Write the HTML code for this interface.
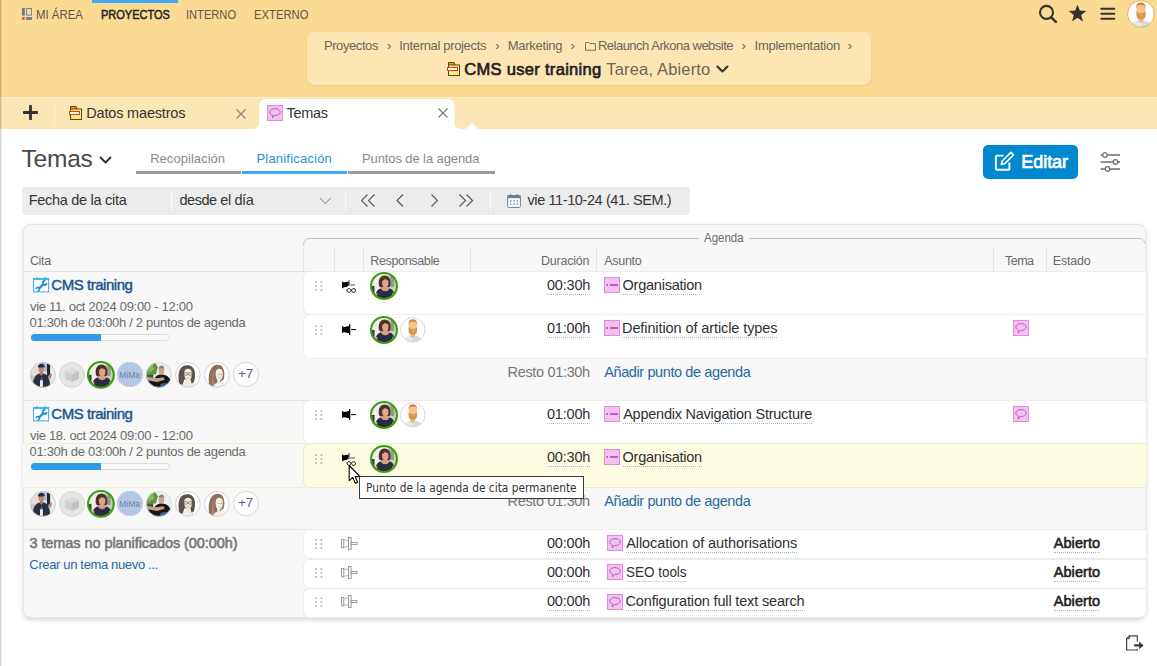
<!DOCTYPE html>
<html lang="es">
<head>
<meta charset="utf-8">
<title>Temas</title>
<style>
*{box-sizing:border-box;margin:0;padding:0}
html,body{width:1157px;height:666px;overflow:hidden;background:#fff}
body{font-family:"Liberation Sans",sans-serif;color:#222;position:relative;font-size:14px}
.abs{position:absolute}
.t{position:absolute;white-space:pre;line-height:1;transform-origin:0 0}
.u{padding-bottom:1.500px;border-bottom:1px dotted #9fbdd6}
#top{position:absolute;left:0;top:0;width:1157px;height:97px;background:#fbdb93}
#edge{display:none}
#actbar{position:absolute;left:92px;top:0;width:86px;height:3px;background:#3fa9f5}
#bc{position:absolute;left:307px;top:32px;width:564px;height:52.500px;background:#fde6b3;border-radius:7px;box-shadow:0 1px 2px rgba(214,170,80,.35)}
#tabs{position:absolute;left:0;top:97px;width:1157px;height:32px;background:#fde6b6;border-top:1px solid #fdedc8}
#leftline{position:absolute;left:0;top:0;width:2px;height:666px;background:linear-gradient(90deg,rgba(0,0,0,.22) 0,rgba(0,0,0,.16) 50%,rgba(0,0,0,.05) 75%,rgba(0,0,0,0) 100%)}
#tbl{position:absolute;left:22.500px;top:224px;width:1123.500px;height:393.500px;background:#f8f8f8;border:1px solid #e5e5e5;border-radius:8px;box-shadow:0 2px 5px rgba(0,0,0,.16)}
</style>
</head>
<body>
<div id="top">
<div id="edge">
</div>
<div id="actbar">
</div>
<svg class="abs" style="left:22px;top:8px" width="10" height="12" viewBox="0 0 10 12">
<rect x="0" y="0" width="2.800" height="7.600" fill="#5f7b9c"/>
<rect x="0" y="9.100" width="2.800" height="2.700" fill="#e8534f"/>
<rect x="4.600" y=".45" width="4.900" height="6.700" fill="none" stroke="#5f7b9c" stroke-width=".9"/>
<rect x="4.100" y="9.100" width="5.900" height="2.700" fill="#5f7b9c"/>
</svg>
<span class="t" style="left:35.56px;top:8.00px;font-size:13px;color:#5e574a;transform:scaleX(0.8783)">MI ÁREA</span>
<span class="t" style="left:100.60px;top:8.00px;font-size:13px;color:#1f1f1f;transform:scaleX(0.8465);-webkit-text-stroke:0.52px #1f1f1f">PROYECTOS</span>
<span class="t" style="left:186.48px;top:8.00px;font-size:13px;color:#5e574a;transform:scaleX(0.8556)">INTERNO</span>
<span class="t" style="left:254.08px;top:8.00px;font-size:13px;color:#5e574a;transform:scaleX(0.8666)">EXTERNO</span>
<svg class="abs" style="left:1036px;top:2px" width="24" height="24" viewBox="0 0 24 24">
<circle cx="10.500" cy="10.400" r="6.500" fill="none" stroke="#333" stroke-width="2.100"/>
<path d="M15.300 15.300l4.500 4.500" stroke="#333" stroke-width="2.500" stroke-linecap="round"/>
</svg>
<svg class="abs" style="left:1068px;top:4px" width="19" height="18" viewBox="0 0 19 18">
<path d="M9.500.4l2.300 6.200 6.600.3-5.200 4.100 1.800 6.400-5.500-3.700L4 17.400 5.800 11 .6 6.900l6.600-.3z" fill="#333"/>
</svg>
<svg class="abs" style="left:1100px;top:7px" width="16" height="14" viewBox="0 0 16 14">
<rect x=".3" y=".8" width="15" height="2" rx="1" fill="#333"/>
<rect x=".3" y="5.800" width="15" height="2" rx="1" fill="#333"/>
<rect x=".3" y="10.800" width="15" height="2" rx="1" fill="#333"/>
</svg>
<svg class="abs" style="left:1126.5px;top:-0.5px" width="28" height="28" viewBox="0 0 28 28">
<defs>
<clipPath id="m1140_13">
<circle cx="14" cy="14" r="13.300"/>
</clipPath>
</defs>
<g clip-path="url(#m1140_13)">
<rect width="28" height="28" fill="#fff"/>
<path d="M3 28c0-5 4-7.300 11-7.300s11 2.300 11 7.300z" fill="#e6e6e6"/>
<path d="M14 20.700V28h11c0-5-4-7.300-11-7.300z" fill="#dadada"/>
<path d="M11.500 16h5v5.200L14 23l-2.500-1.800z" fill="#eeb989"/>
<rect x="9.500" y="3.200" width="9" height="16" rx="3.600" fill="#f5c48e"/>
<path d="M9.500 8c-.3-3.800 1.400-5.600 4.500-5.600s4.800 1.800 4.500 5.600c-.5-1.500-1-2.300-1.500-2.700h-6c-.5.400-1 1.200-1.500 2.700z" fill="#c68a52"/>
<path d="M9.500 11c.9 1.700 2.100 2.200 4.500 2.200s3.600-.5 4.500-2.200v4.600c0 2.300-2 3.900-4.500 3.900s-4.500-1.600-4.500-3.900z" fill="#d6944f"/>
<rect x="12.300" y="14.600" width="3.400" height="1" rx=".5" fill="#e8b07a"/>
</g>
<circle cx="14" cy="14" r="13.400" fill="none" stroke="#d9b56c" stroke-width="1"/>
</svg>
<div id="bc">
</div>
<span class="t" style="left:323.93px;top:39.00px;font-size:13px;color:#6b665c;letter-spacing:-0.410px">Proyectos</span>
<span class="t" style="left:386.94px;top:39.00px;font-size:13px;color:#6b665c">›</span>
<span class="t" style="left:399.30px;top:39.00px;font-size:13px;color:#6b665c;letter-spacing:-0.333px">Internal projects</span>
<span class="t" style="left:495.14px;top:39.00px;font-size:13px;color:#6b665c">›</span>
<span class="t" style="left:507.63px;top:39.00px;font-size:13px;color:#6b665c;letter-spacing:-0.272px">Marketing</span>
<span class="t" style="left:570.44px;top:39.00px;font-size:13px;color:#6b665c">›</span>
<svg class="abs" style="left:585px;top:42px" width="11" height="9" viewBox="0 0 11 9">
<path d="M.5 8.300V.5h3.300l.8 1.100h5.900v6.700z" fill="none" stroke="#6b665c" stroke-width=".9"/>
</svg>
<span class="t" style="left:597.93px;top:39.00px;font-size:13px;color:#6b665c;letter-spacing:-0.503px">Relaunch Arkona website</span>
<span class="t" style="left:741.44px;top:39.00px;font-size:13px;color:#6b665c">›</span>
<span class="t" style="left:754.60px;top:39.00px;font-size:13px;color:#6b665c;letter-spacing:-0.259px">Implementation</span>
<span class="t" style="left:847.74px;top:39.00px;font-size:13px;color:#6b665c">›</span>
<svg class="abs" style="left:447px;top:62px" width="14" height="15" viewBox="0 0 14 15">
<path d="M1.500 3.500V.5h5.700l.9 2.900" fill="#f59a10" stroke="#5a4a10" stroke-width="1"/>
<rect x="1.500" y="3" width="11" height="10.500" fill="#fdea80" stroke="#4d4a22" stroke-width="1"/>
<rect x=".5" y="5.500" width="10" height="3" fill="#fff" stroke="#ee3311" stroke-width="1"/>
</svg>
<span class="t" style="left:464.18px;top:61.00px;font-size:16.5px;color:#1f1f1f;letter-spacing:0.314px;-webkit-text-stroke:0.66px #1f1f1f">CMS user training</span>
<span class="t" style="left:606.34px;top:61.00px;font-size:16.5px;color:#6b665c;letter-spacing:0.164px">Tarea, Abierto</span>
<svg class="abs" style="left:716px;top:65px" width="13" height="9" viewBox="0 0 13 9">
<path d="M1.400 1.500l5 5 5-5" fill="none" stroke="#333" stroke-width="2.100" stroke-linecap="round" stroke-linejoin="round"/>
</svg>
</div>
<div id="tabs">
</div>
<svg class="abs" style="left:0;top:97px" width="480" height="32" viewBox="0 0 480 32">
<path d="M259.300 32V8a6 6 0 0 1 6-6h183.200a6 6 0 0 1 6 6v24z" fill="#fff"/>
<path d="M253 32h7v-7a7 7 0 0 1-7 7zM454 25v7h7a7 7 0 0 1-7-7z" fill="#fff"/>
<path d="M465.500 32l6.300-6.500 6.300 6.500z" fill="#fff"/>
<rect x="54.500" y="4" width="1" height="23" fill="#fbefd2"/>
</svg>
<svg class="abs" style="left:23px;top:105px" width="15" height="15" viewBox="0 0 15 15">
<path d="M7.500 1v13M1 7.500h13" stroke="#333" stroke-width="2.800" stroke-linecap="round"/>
</svg>
<svg class="abs" style="left:69px;top:106px" width="14" height="15" viewBox="0 0 14 15">
<path d="M1.500 3.500V.5h5.700l.9 2.900" fill="#f59a10" stroke="#5a4a10" stroke-width="1"/>
<rect x="1.500" y="3" width="11" height="10.500" fill="#fdea80" stroke="#4d4a22" stroke-width="1"/>
<rect x=".5" y="5.500" width="10" height="3" fill="#fff" stroke="#ee3311" stroke-width="1"/>
</svg>
<span class="t" style="left:86.31px;top:106.00px;font-size:14.5px;color:#333;letter-spacing:-0.180px">Datos maestros</span>
<svg class="abs" style="left:236px;top:108.500px" width="10" height="10" viewBox="0 0 10 10">
<path d="M.5.500l9 9M9.500.5l-9 9" stroke="#8a857a" stroke-width="1.100"/>
</svg>
<svg class="abs" style="left:267px;top:105px" width="16" height="16" viewBox="0 0 16 16">
<rect x=".5" y=".5" width="15" height="15" fill="#efc2ef" stroke="#df8cdf"/>
<path d="M8 3.6c-3 0-5.2 1.5-5.2 3.5 0 1.5 1.2 2.7 3 3.2l-.4 2.6 2.2-2.4H8c3 0 5.2-1.5 5.2-3.4S11 3.600 8 3.600z" fill="#efc2ef" stroke="#cc55cc" stroke-width="1"/>
</svg>
<span class="t" style="left:286.43px;top:106.00px;font-size:14.5px;color:#333;letter-spacing:-0.282px">Temas</span>
<svg class="abs" style="left:437.500px;top:108px" width="10" height="10" viewBox="0 0 10 10">
<path d="M.5.500l9 9M9.500.5l-9 9" stroke="#777" stroke-width="1.100"/>
</svg>
<div id="leftline">
</div>
<span class="t" style="left:21.46px;top:147.00px;font-size:24.5px;color:#484848;letter-spacing:-0.188px">Temas</span>
<svg class="abs" style="left:99px;top:155.500px" width="13" height="9" viewBox="0 0 13 9">
<path d="M1.500 1.500l5 5 5-5" fill="none" stroke="#333" stroke-width="1.900" stroke-linecap="round" stroke-linejoin="round"/>
</svg>
<span class="t" style="left:150.18px;top:152.00px;font-size:13px;color:#8a8a8a;letter-spacing:0.042px">Recopilación</span>
<span class="t" style="left:256.43px;top:152.00px;font-size:13px;color:#2a8fd8;letter-spacing:0.200px">Planificación</span>
<span class="t" style="left:361.93px;top:152.00px;font-size:13px;color:#8a8a8a;letter-spacing:-0.096px">Puntos de la agenda</span>
<div class="abs" style="left:136px;top:171px;width:104.500px;height:3px;background:#999">
</div>
<div class="abs" style="left:242px;top:171px;width:104.500px;height:3px;background:#3fa9f5">
</div>
<div class="abs" style="left:348px;top:171px;width:147px;height:3px;background:#999">
</div>
<div class="abs" style="left:983px;top:145px;width:95px;height:34px;border-radius:5px;background:#0288d1">
</div>
<svg class="abs" style="left:994px;top:150px" width="22" height="22" viewBox="0 0 22 22">
<path d="M9.500 5.600H2.900a1 1 0 0 0-1 1v12.200a1 1 0 0 0 1 1h11.500a1 1 0 0 0 1-1v-6.300" fill="none" stroke="#fff" stroke-width="1.900"/>
<path d="M16.900 2.300l2.600 2.600-8.700 8.700-3.500.9.900-3.500z" fill="#0288d1" stroke="#fff" stroke-width="1.600" stroke-linejoin="round"/>
</svg>
<span class="t" style="left:1021.22px;top:153.00px;font-size:18px;color:#fff;letter-spacing:-0.033px;-webkit-text-stroke:0.72px #fff">Editar</span>
<svg class="abs" style="left:1100px;top:151px" width="21" height="22" viewBox="0 0 21 22" fill="none" stroke="#6e6e6e" stroke-width="1.300">
<path d="M.5 4h2M7.400 4h12.600M.5 11h12.600M18 11h2M.5 18h4.600M10 18h10"/>
<circle cx="4.900" cy="4" r="2.300"/>
<circle cx="15.500" cy="11" r="2.300"/>
<circle cx="7.500" cy="18" r="2.300"/>
</svg>
<div class="abs" style="left:22px;top:187px;width:667.500px;height:28px;border-radius:4px;background:#ececec">
</div>
<div class="abs" style="left:170.5px;top:190.500px;width:1px;height:21px;background:#f9f9f9">
</div>
<div class="abs" style="left:344.5px;top:190.500px;width:1px;height:21px;background:#f9f9f9">
</div>
<div class="abs" style="left:490px;top:190.500px;width:1px;height:21px;background:#f9f9f9">
</div>
<span class="t" style="left:28.81px;top:193.00px;font-size:14.5px;color:#343434;letter-spacing:-0.297px">Fecha de la cita</span>
<span class="t" style="left:179.39px;top:193.00px;font-size:14.5px;color:#343434;letter-spacing:-0.424px">desde el día</span>
<svg class="abs" style="left:318.500px;top:196.500px" width="13" height="8" viewBox="0 0 13 8">
<path d="M.8 1l5.500 5.500L11.800 1" fill="none" stroke="#6b7f94" stroke-width="1"/>
</svg>
<svg class="abs" style="left:360px;top:193px" width="115" height="15" viewBox="0 0 115 15" fill="none" stroke="#555" stroke-width="1.100">
<path d="M7.500 1.500l-6 6 6 6M14.500 1.500l-6 6 6 6"/>
<path d="M43 1.500l-6 6 6 6"/>
<path d="M71.500 1.500l6 6-6 6"/>
<path d="M99.500 1.500l6 6-6 6M106.500 1.500l6 6-6 6"/>
</svg>
<svg class="abs" style="left:506.500px;top:194px" width="14" height="14" viewBox="0 0 14 14">
<rect x=".6" y="1.600" width="12.800" height="11.800" rx="1" fill="#fff" stroke="#6b7f94" stroke-width="1"/>
<rect x=".6" y="1.200" width="12.800" height="3" fill="#6b7f94"/>
<rect x="3" y="0" width="1.200" height="2" fill="#6b7f94"/>
<rect x="9.800" y="0" width="1.200" height="2" fill="#6b7f94"/>
<g fill="#6b7f94">
<rect x="3" y="6.300" width="1.400" height="1.400"/>
<rect x="6.300" y="6.300" width="1.400" height="1.400"/>
<rect x="9.600" y="6.300" width="1.400" height="1.400"/>
<rect x="3" y="9.500" width="1.400" height="1.400"/>
<rect x="6.300" y="9.500" width="1.400" height="1.400"/>
<rect x="9.600" y="9.500" width="1.400" height="1.400"/>
</g>
</svg>
<span class="t" style="left:527.46px;top:193.00px;font-size:14.5px;color:#343434;letter-spacing:-0.394px">vie 11-10-24 (41. SEM.)</span>
<div id="tbl">
</div>
<svg class="abs" style="left:303px;top:237px" width="843" height="36" viewBox="0 0 843 36" fill="none" stroke="#c4c4c4" stroke-width="1">
<path d="M.5 8.500V8a6.500 6.500 0 0 1 6.500-6.500H396M446 1.500h390a6.500 6.500 0 0 1 6.300 5.500"/>
</svg>
<span class="t" style="left:704.23px;top:232.00px;font-size:12.5px;color:#6a6a6a;transform:scaleX(0.9166)">Agenda</span>
<span class="t" style="left:29.88px;top:255.00px;font-size:12.5px;color:#6a6a6a;letter-spacing:-0.290px">Cita</span>
<span class="t" style="left:370.23px;top:255.00px;font-size:12.5px;color:#6a6a6a;letter-spacing:-0.339px">Responsable</span>
<span class="t" style="left:540.98px;top:255.00px;font-size:12.5px;color:#6a6a6a;letter-spacing:-0.208px">Duración</span>
<span class="t" style="left:604.23px;top:255.00px;font-size:12.5px;color:#6a6a6a;letter-spacing:-0.276px">Asunto</span>
<span class="t" style="left:1004.98px;top:255.00px;font-size:12.5px;color:#6a6a6a;letter-spacing:-0.521px">Tema</span>
<span class="t" style="left:1052.72px;top:255.00px;font-size:12.5px;color:#6a6a6a;letter-spacing:-0.176px">Estado</span>
<div class="abs" style="left:303px;top:248px;width:1px;height:23px;background:#e6e6e6">
</div>
<div class="abs" style="left:333.5px;top:248px;width:1px;height:23px;background:#e6e6e6">
</div>
<div class="abs" style="left:363px;top:248px;width:1px;height:23px;background:#e6e6e6">
</div>
<div class="abs" style="left:470px;top:248px;width:1px;height:23px;background:#e6e6e6">
</div>
<div class="abs" style="left:596px;top:248px;width:1px;height:23px;background:#e6e6e6">
</div>
<div class="abs" style="left:993px;top:248px;width:1px;height:23px;background:#e6e6e6">
</div>
<div class="abs" style="left:1046px;top:248px;width:1px;height:23px;background:#e6e6e6">
</div>
<div class="abs" style="left:23px;top:271px;width:1123px;height:1px;background:#e2e2e2">
</div>
<div class="abs" style="left:304px;top:272px;width:842px;height:42px;background:#fff;border-radius:6px 0 0 6px;box-shadow:0 0 0 1px #ececec">
</div>
<div class="abs" style="left:304px;top:315px;width:842px;height:42.5px;background:#fff;border-radius:6px 0 0 6px;box-shadow:0 0 0 1px #ececec">
</div>
<svg class="abs" style="left:33px;top:277px" width="17" height="16" viewBox="0 0 17 16">
<rect x=".55" y="1.500" width="15" height="13.400" fill="#fff" stroke="#45b4f2" stroke-width="1.100"/>
<rect x="0" y="1" width="16.100" height="2.100" fill="#45b4f2"/>
<rect x="3.300" y="0" width="1.300" height="2" fill="#45b4f2"/>
<rect x="11.500" y="0" width="1.300" height="2" fill="#45b4f2"/>
<g fill="none" stroke="#1a8fdc">
<path d="M5.600 11.900l5.400-5.400" stroke-width="2.300"/>
<circle cx="11.700" cy="5.900" r="2" stroke-width="1.700" stroke-dasharray="9.200 3.400"/>
<circle cx="4.800" cy="12.300" r="1.700" stroke-width="1.500" stroke-dasharray="7.700 3" transform="rotate(180 4.800 12.300)"/>
</g>
</svg>
<span class="t" style="left:51.25px;top:277.00px;font-size:15px;color:#15568f;letter-spacing:-0.454px;-webkit-text-stroke:0.42px #15568f">CMS training</span>
<span class="t" style="left:29.96px;top:300.00px;font-size:13px;color:#6a6a6a;letter-spacing:-0.277px">vie 11. oct 2024 09:00 - 12:00</span>
<span class="t" style="left:29.49px;top:316.00px;font-size:13px;color:#6a6a6a;letter-spacing:-0.298px">01:30h de 03:00h / 2 puntos de agenda</span>
<div class="abs" style="left:30.500px;top:334.3px;width:139px;height:7px;border-radius:4px;border:1px solid #dcdcdc;background:#fafafa">
</div>
<div class="abs" style="left:30.500px;top:334.3px;width:70px;height:7px;border-radius:4px 0 0 4px;background:#2f9ae8">
</div>
<svg class="abs" style="left:30.1px;top:361.8px" width="25.800" height="25.800" viewBox="0 0 25 25">
<defs>
<clipPath id="p1374">
<circle cx="12.500" cy="12.500" r="12.200"/>
</clipPath>
</defs>
<g clip-path="url(#p1374)">
<rect width="25" height="25" fill="#e4dcdc"/>
<rect x="10" y="0" width="8" height="9" fill="#a9c0da"/>
<rect x="16.500" y="1.500" width="3.200" height="13" fill="#26272c"/>
<rect x="19.700" y="0" width="5.300" height="25" fill="#e9edf2"/>
<rect x="0" y="13" width="5" height="12" fill="#cfc8c4"/>
<path d="M2.500 25c0-8.500 2.500-14.200 8.800-14.200 5.700 0 8.200 4.700 8.200 14.200z" fill="#2a2f3a"/>
<ellipse cx="10.900" cy="6.900" rx="2.700" ry="3.100" fill="#b88d76"/>
<path d="M7.600 5.200c0-2.400 1.500-3.600 3.500-3.600 1.900 0 3.200 1.200 3.200 3.200l-1.200.5H8.400z" fill="#262c3c"/>
<path d="M9.600 9.600h2.800l.4 2.400-1.800 1.300-1.800-1.300z" fill="#a67c66"/>
<path d="M17.300 14.300l2.600-3.400 1.500.9-1.400 4.300-2.200.4z" fill="#b88d76"/>
<path d="M11.300 13.500l.8 5.500h-1.600z" fill="#8e9aa8"/>
<rect x="9.700" y="17.500" width="2.800" height="7.500" rx=".8" fill="#e6edf6"/>
<rect x="10.100" y="16.300" width="2" height="1.500" fill="#3b6fd0"/>
</g>
<circle cx="12.500" cy="12.500" r="12.100" fill="none" stroke="#c9c9c9" stroke-width=".8"/>
</svg>
<svg class="abs" style="left:58.9px;top:361.8px" width="25.800" height="25.800" viewBox="0 0 25 25">
<circle cx="12.500" cy="12.500" r="12" fill="#e5e5e5" stroke="#d2d2d2" stroke-width=".9"/>
<path d="M12.500 5.800l6.800 3v7.400l-6.800 3.300-6.800-3.300V8.800z" fill="#cfcfcf"/>
<path d="M12.500 11.900l6.800-3.100v7.400l-6.800 3.300z" fill="#c2c2c2"/>
<path d="M12.500 5.800l6.800 3-6.800 3.100-6.800-3.100z" fill="#dadada"/>
</svg>
<svg class="abs" style="left:87.19999999999999px;top:361.1px" width="27.8" height="27.8" viewBox="0 0 28 28">
<defs>
<clipPath id="cw101_375">
<circle cx="14" cy="14" r="12.500"/>
</clipPath>
</defs>
<g clip-path="url(#cw101_375)">
<rect width="28" height="28" fill="#efeeea"/>
<rect x="18" y="0" width="10" height="20" fill="#c9d2c0"/>
<rect x="20.500" y="3" width="3.500" height="12" fill="#8fa080"/>
<rect x="2" y="14" width="2.500" height="9" fill="#3b3a3a"/>
<path d="M8.800 13c-.6-5.500 1.500-9.500 5.800-9.500s6.600 3.700 6 9.500c-.3 1.800-1.600 2.600-2.800 2.600h-6c-1.400 0-2.700-.8-3-2.600z" fill="#4e3226"/>
<ellipse cx="15.300" cy="11" rx="3.200" ry="4.200" fill="#dfa58c"/>
<path d="M12.100 9.300c.6-2.300 1.900-3.300 3.600-3.300 1.400 0 2.400.8 2.800 2.600-1.300-.7-2.500-1.200-3.700-1.600-.8.800-1.700 1.600-2.700 2.300z" fill="#4e3226"/>
<ellipse cx="15.300" cy="17.300" rx="4.600" ry="2.600" fill="#d99e85"/>
<path d="M13.600 14.500h3.400v4h-3.400z" fill="#d99e85"/>
<path d="M5.500 24c.3-4.500 2.500-6.800 5.200-7.400l2.400 2.300h4.300l2.300-2.300c2.900.7 4.600 3 4.800 7.400v4h-19z" fill="#2b2c42"/>
<path d="M13 16.600h4.600l-2.300 3.200z" fill="#dba189"/>
<path d="M5.700 20.500l1.800 1.200-.8 6.300H4.900z" fill="#dba189"/>
<path d="M23.800 20.500l-1.800 1.200.8 6.300h1.800z" fill="#dba189"/>
</g>
<circle cx="14" cy="14" r="12.950" fill="none" stroke="#3a9d12" stroke-width="2.100"/>
</svg>
<div class="abs" style="left:117.300px;top:361.7px;width:25.700px;height:25.700px;border-radius:50%;background:#b5c7e6;box-shadow:inset 0 0 0 1px #c6cfe2">
</div>
<span class="t" style="left:119.30px;top:371.00px;font-size:8.5px;color:#6c7fa6;letter-spacing:-0.030px">MiMa</span>
<svg class="abs" style="left:146.2px;top:361.8px" width="25.800" height="25.800" viewBox="0 0 25 25">
<defs>
<clipPath id="p5374">
<circle cx="12.500" cy="12.500" r="12.200"/>
</clipPath>
</defs>
<g clip-path="url(#p5374)">
<rect width="25" height="25" fill="#eef1f2"/>
<path d="M0 2l4-2 5 1 2.500 4-2 7H0z" fill="#5e9440"/>
<path d="M1 5l5-3 2 5-5 4z" fill="#86b85c"/>
<rect x="0" y="12" width="7" height="4" fill="#3e5a34"/>
<path d="M6.500 25c0-8.500 2.500-13 8.500-13s9 4 9.500 9l-1 4z" fill="#17181b"/>
<ellipse cx="15" cy="8.300" rx="2.700" ry="3.400" fill="#c9a088"/>
<path d="M12.300 7.200c0-2.600 1.200-3.700 2.800-3.700s2.700 1.100 2.700 3.500c-1-1.200-4.300-1.200-5.500.2z" fill="#8a8580"/>
<path d="M12.800 9.800c.6 1.800 1.400 2.400 2.300 2.400s1.700-.6 2.200-2.400l-.4 2.600h-3.700z" fill="#9b8878"/>
<path d="M1 14.500l9 1.300 7-1 1.200 2.400-7.500 2.300-9.700-1.500z" fill="#c9a088"/>
<path d="M0 17.500l8 1.500 2 6H0z" fill="#16171c"/>
<path d="M14 21l6-1 2 5h-8z" fill="#3a5e9a"/>
</g>
<circle cx="12.500" cy="12.500" r="12.100" fill="none" stroke="#cfcfcf" stroke-width=".7"/>
</svg>
<svg class="abs" style="left:175.0px;top:361.8px" width="25.800" height="25.800" viewBox="0 0 25 25">
<defs>
<clipPath id="p6374">
<circle cx="12.500" cy="12.500" r="12"/>
</clipPath>
</defs>
<g clip-path="url(#p6374)">
<rect width="25" height="25" fill="#fff"/>
<path d="M4.500 21.500c-1.800-5-1.600-13 1.800-16.300 2.700-2.600 8-2.600 10.700-.2 3 2.800 3 9.500 1.300 14.500l-2.300 2-1-4.500h-6l-1.500 5z" fill="#5e544c"/>
<path d="M9.300 8.500c1-2.300 5-2.700 6.500-.3.800 1.400.8 5.500-.5 8-1 1.700-4 1.800-5.200 0-1.300-2.200-1.500-6-.8-7.700z" fill="#f4ebe3"/>
<rect x="8.800" y="10.400" width="3.300" height="2.300" rx=".7" fill="#e9efe2" stroke="#64703f" stroke-width=".7"/>
<rect x="13" y="10.400" width="3.300" height="2.300" rx=".7" fill="#e9efe2" stroke="#64703f" stroke-width=".7"/>
<path d="M10.800 15.200c.8.600 2.200.6 3 0" stroke="#c98f84" stroke-width=".6" fill="none"/>
<path d="M7 25c.3-3.700 2.300-5.200 5.500-5.200s5.200 1.500 5.500 5.200z" fill="#f3f0ea" stroke="#d9d2c6" stroke-width=".4"/>
<path d="M11 17.300h3v3l-1.500 1.500-1.500-1.500z" fill="#f1e6dc"/>
</g>
<circle cx="12.500" cy="12.500" r="12" fill="none" stroke="#cfcfcf" stroke-width=".9"/>
</svg>
<svg class="abs" style="left:203.9px;top:361.8px" width="25.800" height="25.800" viewBox="0 0 25 25">
<defs>
<clipPath id="p7374">
<circle cx="12.500" cy="12.500" r="12"/>
</clipPath>
</defs>
<g clip-path="url(#p7374)">
<rect width="25" height="25" fill="#fff"/>
<path d="M5.500 24c-1.500-6-1.500-15.500 3-19.500 2.800-2.500 7.500-2.300 9.500.5 2 3 2.200 8 1 12l-2 1.500-7 6.500z" fill="#8f6e5a"/>
<path d="M8 24c-1-5-.5-12 2-16l-1 8 2 8z" fill="#a98a76"/>
<path d="M11.800 8.300c1.500-2.400 5-2.300 6 .2.800 2 .6 5.700-.7 8-1 1.800-3.300 2-4.500.5-1.500-2-1.800-6.500-.8-8.700z" fill="#f6ece4"/>
<path d="M14 12h1.300M16.300 12h1.200" stroke="#6b5346" stroke-width=".6"/>
<path d="M14.600 15.600c.7.400 1.600.4 2.200 0" stroke="#d08a86" stroke-width=".6" fill="none"/>
<path d="M9 25c.3-3.200 2.200-4.800 5.200-4.800s4.800 1.600 5.200 4.800z" fill="#f7f2ec" stroke="#e0d6ca" stroke-width=".4"/>
<path d="M12.800 17.200h2.800v3.300h-2.800z" fill="#f3e7dd"/>
</g>
<circle cx="12.500" cy="12.500" r="12" fill="none" stroke="#cfcfcf" stroke-width=".9"/>
</svg>
<div class="abs" style="left:233.200px;top:361.6px;width:25.800px;height:25.800px;border-radius:50%;background:#fff;border:1px solid #d6d6d6">
</div>
<span class="t" style="left:238.36px;top:368.00px;font-size:12px;color:#5a5c8a;transform:scaleX(1.1191)">+7</span>
<svg class="abs" style="left:315px;top:281px" width="8" height="10" viewBox="0 0 8 10">
<rect x="0.2" y="0.2" width="1.700" height="1.700" fill="#aab4c6"/>
<rect x="0.2" y="4.2" width="1.700" height="1.700" fill="#aab4c6"/>
<rect x="0.2" y="8.2" width="1.700" height="1.700" fill="#aab4c6"/>
<rect x="5.6" y="0.2" width="1.700" height="1.700" fill="#aab4c6"/>
<rect x="5.6" y="4.2" width="1.700" height="1.700" fill="#aab4c6"/>
<rect x="5.6" y="8.2" width="1.700" height="1.700" fill="#aab4c6"/>
</svg>
<svg class="abs" style="left:341.9px;top:280.1px" width="15" height="13.500" viewBox="0 0 15 13.500">
<rect x="0" y="1.600" width="1.300" height="6.600" rx=".5" fill="#000"/>
<path d="M1 2.500l6.200-.9v3.600L4.500 7l-3.500.4z" fill="#000"/>
<rect x="6.400" y="0" width="1.400" height="5.600" rx=".5" fill="#777"/>
<rect x="8.300" y="4.300" width="4.700" height="1.300" fill="#777"/>
<path d="M9.300 10.600c-.8-1.500-1.500-2-2.400-2-1 0-1.800.8-1.800 1.900s.8 1.900 1.800 1.900c.9 0 1.600-.5 2.400-1.800.8-1.500 1.500-2 2.400-2 1 0 1.800.8 1.800 1.900s-.8 1.900-1.800 1.900c-.9 0-1.600-.5-2.400-1.800z" fill="none" stroke="#000" stroke-width="1"/>
</svg>
<svg class="abs" style="left:370px;top:272px" width="28" height="28" viewBox="0 0 28 28">
<defs>
<clipPath id="cw384_286">
<circle cx="14" cy="14" r="12.500"/>
</clipPath>
</defs>
<g clip-path="url(#cw384_286)">
<rect width="28" height="28" fill="#efeeea"/>
<rect x="18" y="0" width="10" height="20" fill="#c9d2c0"/>
<rect x="20.500" y="3" width="3.500" height="12" fill="#8fa080"/>
<rect x="2" y="14" width="2.500" height="9" fill="#3b3a3a"/>
<path d="M8.800 13c-.6-5.500 1.500-9.500 5.800-9.500s6.600 3.700 6 9.500c-.3 1.800-1.600 2.600-2.800 2.600h-6c-1.400 0-2.700-.8-3-2.600z" fill="#4e3226"/>
<ellipse cx="15.300" cy="11" rx="3.200" ry="4.200" fill="#dfa58c"/>
<path d="M12.100 9.300c.6-2.300 1.900-3.300 3.600-3.300 1.400 0 2.400.8 2.800 2.600-1.300-.7-2.500-1.200-3.700-1.600-.8.800-1.700 1.600-2.700 2.300z" fill="#4e3226"/>
<ellipse cx="15.300" cy="17.300" rx="4.600" ry="2.600" fill="#d99e85"/>
<path d="M13.600 14.500h3.400v4h-3.400z" fill="#d99e85"/>
<path d="M5.500 24c.3-4.500 2.500-6.800 5.200-7.400l2.400 2.300h4.300l2.300-2.300c2.900.7 4.600 3 4.800 7.400v4h-19z" fill="#2b2c42"/>
<path d="M13 16.600h4.600l-2.300 3.200z" fill="#dba189"/>
<path d="M5.700 20.500l1.800 1.200-.8 6.300H4.900z" fill="#dba189"/>
<path d="M23.800 20.500l-1.800 1.200.8 6.300h1.800z" fill="#dba189"/>
</g>
<circle cx="14" cy="14" r="12.950" fill="none" stroke="#3a9d12" stroke-width="2.100"/>
</svg>
<span class="t u" style="left:546.93px;top:278.00px;font-size:14.5px;color:#303030;letter-spacing:-0.173px">00:30h</span>
<svg class="abs" style="left:604px;top:276.8px" width="16" height="16" viewBox="0 0 16 16">
<rect x=".5" y=".5" width="15" height="15" fill="#efc2ef" stroke="#df8cdf"/>
<rect x="2.300" y="7" width="1.800" height="2" fill="#cc55cc"/>
<rect x="6" y="7" width="8" height="2" fill="#cc55cc"/>
</svg>
<span class="t u" style="left:622.52px;top:278.00px;font-size:14.5px;color:#303030;letter-spacing:-0.232px">Organisation</span>
<svg class="abs" style="left:315px;top:325px" width="8" height="10" viewBox="0 0 8 10">
<rect x="0.2" y="0.2" width="1.700" height="1.700" fill="#aab4c6"/>
<rect x="0.2" y="4.2" width="1.700" height="1.700" fill="#aab4c6"/>
<rect x="0.2" y="8.2" width="1.700" height="1.700" fill="#aab4c6"/>
<rect x="5.6" y="0.2" width="1.700" height="1.700" fill="#aab4c6"/>
<rect x="5.6" y="4.2" width="1.700" height="1.700" fill="#aab4c6"/>
<rect x="5.6" y="8.2" width="1.700" height="1.700" fill="#aab4c6"/>
</svg>
<svg class="abs" style="left:341.9px;top:323.9px" width="15" height="11" viewBox="0 0 15 11">
<rect x="0" y="2.100" width="1.300" height="6.900" rx=".5" fill="#000"/>
<path d="M1 3.300l6.200-1.300v7.200L1 7.900z" fill="#000"/>
<rect x="7" y="0" width="1.300" height="11" rx=".6" fill="#000"/>
<rect x="9.100" y="5.050" width="5" height="1.050" fill="#000"/>
</svg>
<svg class="abs" style="left:370px;top:316px" width="28" height="28" viewBox="0 0 28 28">
<defs>
<clipPath id="cw384_330">
<circle cx="14" cy="14" r="12.500"/>
</clipPath>
</defs>
<g clip-path="url(#cw384_330)">
<rect width="28" height="28" fill="#efeeea"/>
<rect x="18" y="0" width="10" height="20" fill="#c9d2c0"/>
<rect x="20.500" y="3" width="3.500" height="12" fill="#8fa080"/>
<rect x="2" y="14" width="2.500" height="9" fill="#3b3a3a"/>
<path d="M8.800 13c-.6-5.500 1.500-9.500 5.800-9.500s6.600 3.700 6 9.500c-.3 1.800-1.600 2.600-2.800 2.600h-6c-1.400 0-2.700-.8-3-2.600z" fill="#4e3226"/>
<ellipse cx="15.300" cy="11" rx="3.200" ry="4.200" fill="#dfa58c"/>
<path d="M12.100 9.300c.6-2.300 1.900-3.300 3.600-3.300 1.400 0 2.400.8 2.800 2.600-1.300-.7-2.500-1.200-3.700-1.600-.8.800-1.700 1.600-2.700 2.300z" fill="#4e3226"/>
<ellipse cx="15.300" cy="17.300" rx="4.600" ry="2.600" fill="#d99e85"/>
<path d="M13.600 14.500h3.400v4h-3.400z" fill="#d99e85"/>
<path d="M5.500 24c.3-4.500 2.500-6.800 5.200-7.400l2.400 2.300h4.300l2.300-2.300c2.900.7 4.600 3 4.800 7.400v4h-19z" fill="#2b2c42"/>
<path d="M13 16.600h4.600l-2.300 3.200z" fill="#dba189"/>
<path d="M5.700 20.500l1.800 1.200-.8 6.300H4.900z" fill="#dba189"/>
<path d="M23.800 20.500l-1.800 1.200.8 6.300h1.800z" fill="#dba189"/>
</g>
<circle cx="14" cy="14" r="12.950" fill="none" stroke="#3a9d12" stroke-width="2.100"/>
</svg>
<svg class="abs" style="left:400.09999999999997px;top:317.0px" width="25.6" height="25.6" viewBox="0 0 28 28">
<defs>
<clipPath id="m412_329">
<circle cx="14" cy="14" r="13.300"/>
</clipPath>
</defs>
<g clip-path="url(#m412_329)">
<rect width="28" height="28" fill="#fff"/>
<path d="M3 28c0-5 4-7.300 11-7.300s11 2.300 11 7.300z" fill="#e6e6e6"/>
<path d="M14 20.700V28h11c0-5-4-7.300-11-7.300z" fill="#dadada"/>
<path d="M11.500 16h5v5.200L14 23l-2.500-1.800z" fill="#eeb989"/>
<rect x="9.500" y="3.200" width="9" height="16" rx="3.600" fill="#f5c48e"/>
<path d="M9.500 8c-.3-3.800 1.400-5.600 4.500-5.600s4.800 1.800 4.500 5.600c-.5-1.500-1-2.300-1.500-2.700h-6c-.5.400-1 1.200-1.500 2.700z" fill="#c68a52"/>
<path d="M9.500 11c.9 1.700 2.100 2.200 4.500 2.200s3.600-.5 4.500-2.200v4.600c0 2.300-2 3.900-4.500 3.900s-4.500-1.600-4.500-3.900z" fill="#d6944f"/>
<rect x="12.300" y="14.600" width="3.400" height="1" rx=".5" fill="#e8b07a"/>
</g>
<circle cx="14" cy="14" r="13.400" fill="none" stroke="#d4d4d4" stroke-width="1"/>
</svg>
<span class="t u" style="left:546.93px;top:321.00px;font-size:14.5px;color:#303030;letter-spacing:-0.173px">01:00h</span>
<svg class="abs" style="left:604px;top:320.3px" width="16" height="16" viewBox="0 0 16 16">
<rect x=".5" y=".5" width="15" height="15" fill="#efc2ef" stroke="#df8cdf"/>
<rect x="2.300" y="7" width="1.800" height="2" fill="#cc55cc"/>
<rect x="6" y="7" width="8" height="2" fill="#cc55cc"/>
</svg>
<span class="t u" style="left:622.01px;top:321.00px;font-size:14.5px;color:#303030;letter-spacing:-0.095px">Definition of article types</span>
<svg class="abs" style="left:1013px;top:320.0px" width="16" height="16" viewBox="0 0 16 16">
<rect x=".5" y=".5" width="15" height="15" fill="#efc2ef" stroke="#df8cdf"/>
<path d="M8 3.6c-3 0-5.2 1.5-5.2 3.5 0 1.5 1.2 2.7 3 3.2l-.4 2.6 2.2-2.4H8c3 0 5.2-1.5 5.2-3.4S11 3.600 8 3.600z" fill="#efc2ef" stroke="#cc55cc" stroke-width="1"/>
</svg>
<span class="t" style="left:507.56px;top:365.00px;font-size:14.5px;color:#777;letter-spacing:-0.331px">Resto 01:30h</span>
<span class="t" style="left:604.22px;top:365.00px;font-size:14.5px;color:#2668a3;letter-spacing:-0.395px">Añadir punto de agenda</span>
<div class="abs" style="left:23px;top:400px;width:1123px;height:1px;background:#e6e6e6">
</div>
<div class="abs" style="left:23px;top:442.500px;width:282px;height:45px;background:#f8f8f6;border-top:1px solid #efeed2;border-bottom:1px solid #efeed2">
</div>
<div class="abs" style="left:304px;top:401px;width:842px;height:41.5px;background:#fff;border-radius:6px 0 0 6px;box-shadow:0 0 0 1px #ececec">
</div>
<div class="abs" style="left:304px;top:443.5px;width:842px;height:43.5px;background:#fdfce1;border-radius:6px 0 0 6px;box-shadow:0 0 0 1px #eeeccb">
</div>
<svg class="abs" style="left:33px;top:406px" width="17" height="16" viewBox="0 0 17 16">
<rect x=".55" y="1.500" width="15" height="13.400" fill="#fff" stroke="#45b4f2" stroke-width="1.100"/>
<rect x="0" y="1" width="16.100" height="2.100" fill="#45b4f2"/>
<rect x="3.300" y="0" width="1.300" height="2" fill="#45b4f2"/>
<rect x="11.500" y="0" width="1.300" height="2" fill="#45b4f2"/>
<g fill="none" stroke="#1a8fdc">
<path d="M5.600 11.900l5.400-5.400" stroke-width="2.300"/>
<circle cx="11.700" cy="5.900" r="2" stroke-width="1.700" stroke-dasharray="9.200 3.400"/>
<circle cx="4.800" cy="12.300" r="1.700" stroke-width="1.500" stroke-dasharray="7.700 3" transform="rotate(180 4.800 12.300)"/>
</g>
</svg>
<span class="t" style="left:51.25px;top:406.00px;font-size:15px;color:#15568f;letter-spacing:-0.454px;-webkit-text-stroke:0.42px #15568f">CMS training</span>
<span class="t" style="left:29.96px;top:429.00px;font-size:13px;color:#6a6a6a;letter-spacing:-0.310px">vie 18. oct 2024 09:00 - 12:00</span>
<span class="t" style="left:29.49px;top:445.00px;font-size:13px;color:#6a6a6a;letter-spacing:-0.298px">01:30h de 03:00h / 2 puntos de agenda</span>
<div class="abs" style="left:30.500px;top:463.3px;width:139px;height:7px;border-radius:4px;border:1px solid #dcdcdc;background:#fafafa">
</div>
<div class="abs" style="left:30.500px;top:463.3px;width:70px;height:7px;border-radius:4px 0 0 4px;background:#2f9ae8">
</div>
<svg class="abs" style="left:30.1px;top:490.8px" width="25.800" height="25.800" viewBox="0 0 25 25">
<defs>
<clipPath id="p1503">
<circle cx="12.500" cy="12.500" r="12.200"/>
</clipPath>
</defs>
<g clip-path="url(#p1503)">
<rect width="25" height="25" fill="#e4dcdc"/>
<rect x="10" y="0" width="8" height="9" fill="#a9c0da"/>
<rect x="16.500" y="1.500" width="3.200" height="13" fill="#26272c"/>
<rect x="19.700" y="0" width="5.300" height="25" fill="#e9edf2"/>
<rect x="0" y="13" width="5" height="12" fill="#cfc8c4"/>
<path d="M2.500 25c0-8.500 2.500-14.200 8.800-14.200 5.700 0 8.200 4.700 8.200 14.200z" fill="#2a2f3a"/>
<ellipse cx="10.900" cy="6.900" rx="2.700" ry="3.100" fill="#b88d76"/>
<path d="M7.600 5.200c0-2.400 1.500-3.600 3.500-3.600 1.900 0 3.200 1.200 3.200 3.200l-1.200.5H8.400z" fill="#262c3c"/>
<path d="M9.600 9.600h2.800l.4 2.400-1.800 1.300-1.800-1.300z" fill="#a67c66"/>
<path d="M17.300 14.300l2.600-3.400 1.500.9-1.400 4.300-2.200.4z" fill="#b88d76"/>
<path d="M11.300 13.500l.8 5.500h-1.600z" fill="#8e9aa8"/>
<rect x="9.700" y="17.500" width="2.800" height="7.500" rx=".8" fill="#e6edf6"/>
<rect x="10.100" y="16.300" width="2" height="1.500" fill="#3b6fd0"/>
</g>
<circle cx="12.500" cy="12.500" r="12.100" fill="none" stroke="#c9c9c9" stroke-width=".8"/>
</svg>
<svg class="abs" style="left:58.9px;top:490.8px" width="25.800" height="25.800" viewBox="0 0 25 25">
<circle cx="12.500" cy="12.500" r="12" fill="#e5e5e5" stroke="#d2d2d2" stroke-width=".9"/>
<path d="M12.500 5.800l6.800 3v7.400l-6.800 3.300-6.800-3.300V8.800z" fill="#cfcfcf"/>
<path d="M12.500 11.900l6.800-3.100v7.400l-6.800 3.300z" fill="#c2c2c2"/>
<path d="M12.500 5.800l6.800 3-6.800 3.100-6.800-3.100z" fill="#dadada"/>
</svg>
<svg class="abs" style="left:87.19999999999999px;top:490.1px" width="27.8" height="27.8" viewBox="0 0 28 28">
<defs>
<clipPath id="cw101_504">
<circle cx="14" cy="14" r="12.500"/>
</clipPath>
</defs>
<g clip-path="url(#cw101_504)">
<rect width="28" height="28" fill="#efeeea"/>
<rect x="18" y="0" width="10" height="20" fill="#c9d2c0"/>
<rect x="20.500" y="3" width="3.500" height="12" fill="#8fa080"/>
<rect x="2" y="14" width="2.500" height="9" fill="#3b3a3a"/>
<path d="M8.800 13c-.6-5.500 1.500-9.500 5.800-9.500s6.600 3.700 6 9.500c-.3 1.800-1.600 2.600-2.800 2.600h-6c-1.400 0-2.700-.8-3-2.600z" fill="#4e3226"/>
<ellipse cx="15.300" cy="11" rx="3.200" ry="4.200" fill="#dfa58c"/>
<path d="M12.100 9.300c.6-2.300 1.900-3.300 3.600-3.300 1.400 0 2.400.8 2.800 2.600-1.300-.7-2.500-1.200-3.700-1.600-.8.800-1.700 1.600-2.700 2.300z" fill="#4e3226"/>
<ellipse cx="15.300" cy="17.300" rx="4.600" ry="2.600" fill="#d99e85"/>
<path d="M13.600 14.500h3.400v4h-3.400z" fill="#d99e85"/>
<path d="M5.500 24c.3-4.500 2.500-6.800 5.200-7.400l2.400 2.300h4.300l2.300-2.300c2.900.7 4.600 3 4.800 7.400v4h-19z" fill="#2b2c42"/>
<path d="M13 16.600h4.600l-2.300 3.200z" fill="#dba189"/>
<path d="M5.700 20.500l1.800 1.200-.8 6.300H4.900z" fill="#dba189"/>
<path d="M23.800 20.500l-1.800 1.200.8 6.300h1.800z" fill="#dba189"/>
</g>
<circle cx="14" cy="14" r="12.950" fill="none" stroke="#3a9d12" stroke-width="2.100"/>
</svg>
<div class="abs" style="left:117.300px;top:490.7px;width:25.700px;height:25.700px;border-radius:50%;background:#b5c7e6;box-shadow:inset 0 0 0 1px #c6cfe2">
</div>
<span class="t" style="left:119.30px;top:500.00px;font-size:8.5px;color:#6c7fa6;letter-spacing:-0.030px">MiMa</span>
<svg class="abs" style="left:146.2px;top:490.8px" width="25.800" height="25.800" viewBox="0 0 25 25">
<defs>
<clipPath id="p5503">
<circle cx="12.500" cy="12.500" r="12.200"/>
</clipPath>
</defs>
<g clip-path="url(#p5503)">
<rect width="25" height="25" fill="#eef1f2"/>
<path d="M0 2l4-2 5 1 2.500 4-2 7H0z" fill="#5e9440"/>
<path d="M1 5l5-3 2 5-5 4z" fill="#86b85c"/>
<rect x="0" y="12" width="7" height="4" fill="#3e5a34"/>
<path d="M6.500 25c0-8.500 2.500-13 8.500-13s9 4 9.500 9l-1 4z" fill="#17181b"/>
<ellipse cx="15" cy="8.300" rx="2.700" ry="3.400" fill="#c9a088"/>
<path d="M12.300 7.200c0-2.600 1.200-3.700 2.800-3.700s2.700 1.100 2.700 3.500c-1-1.200-4.300-1.200-5.500.2z" fill="#8a8580"/>
<path d="M12.800 9.800c.6 1.800 1.400 2.400 2.300 2.400s1.700-.6 2.200-2.400l-.4 2.600h-3.700z" fill="#9b8878"/>
<path d="M1 14.500l9 1.300 7-1 1.200 2.400-7.500 2.300-9.700-1.500z" fill="#c9a088"/>
<path d="M0 17.500l8 1.500 2 6H0z" fill="#16171c"/>
<path d="M14 21l6-1 2 5h-8z" fill="#3a5e9a"/>
</g>
<circle cx="12.500" cy="12.500" r="12.100" fill="none" stroke="#cfcfcf" stroke-width=".7"/>
</svg>
<svg class="abs" style="left:175.0px;top:490.8px" width="25.800" height="25.800" viewBox="0 0 25 25">
<defs>
<clipPath id="p6503">
<circle cx="12.500" cy="12.500" r="12"/>
</clipPath>
</defs>
<g clip-path="url(#p6503)">
<rect width="25" height="25" fill="#fff"/>
<path d="M4.500 21.500c-1.800-5-1.600-13 1.800-16.300 2.700-2.600 8-2.600 10.700-.2 3 2.800 3 9.500 1.300 14.500l-2.300 2-1-4.500h-6l-1.500 5z" fill="#5e544c"/>
<path d="M9.300 8.500c1-2.300 5-2.700 6.500-.3.800 1.400.8 5.500-.5 8-1 1.700-4 1.800-5.200 0-1.300-2.200-1.500-6-.8-7.700z" fill="#f4ebe3"/>
<rect x="8.800" y="10.400" width="3.300" height="2.300" rx=".7" fill="#e9efe2" stroke="#64703f" stroke-width=".7"/>
<rect x="13" y="10.400" width="3.300" height="2.300" rx=".7" fill="#e9efe2" stroke="#64703f" stroke-width=".7"/>
<path d="M10.800 15.200c.8.600 2.200.6 3 0" stroke="#c98f84" stroke-width=".6" fill="none"/>
<path d="M7 25c.3-3.700 2.300-5.200 5.500-5.200s5.200 1.500 5.500 5.200z" fill="#f3f0ea" stroke="#d9d2c6" stroke-width=".4"/>
<path d="M11 17.300h3v3l-1.500 1.500-1.500-1.500z" fill="#f1e6dc"/>
</g>
<circle cx="12.500" cy="12.500" r="12" fill="none" stroke="#cfcfcf" stroke-width=".9"/>
</svg>
<svg class="abs" style="left:203.9px;top:490.8px" width="25.800" height="25.800" viewBox="0 0 25 25">
<defs>
<clipPath id="p7503">
<circle cx="12.500" cy="12.500" r="12"/>
</clipPath>
</defs>
<g clip-path="url(#p7503)">
<rect width="25" height="25" fill="#fff"/>
<path d="M5.500 24c-1.500-6-1.500-15.500 3-19.500 2.800-2.500 7.500-2.300 9.500.5 2 3 2.200 8 1 12l-2 1.500-7 6.500z" fill="#8f6e5a"/>
<path d="M8 24c-1-5-.5-12 2-16l-1 8 2 8z" fill="#a98a76"/>
<path d="M11.800 8.300c1.500-2.400 5-2.300 6 .2.800 2 .6 5.700-.7 8-1 1.800-3.300 2-4.500.5-1.500-2-1.800-6.500-.8-8.700z" fill="#f6ece4"/>
<path d="M14 12h1.300M16.300 12h1.200" stroke="#6b5346" stroke-width=".6"/>
<path d="M14.600 15.600c.7.400 1.600.4 2.200 0" stroke="#d08a86" stroke-width=".6" fill="none"/>
<path d="M9 25c.3-3.200 2.200-4.800 5.200-4.800s4.800 1.600 5.200 4.800z" fill="#f7f2ec" stroke="#e0d6ca" stroke-width=".4"/>
<path d="M12.800 17.200h2.800v3.300h-2.800z" fill="#f3e7dd"/>
</g>
<circle cx="12.500" cy="12.500" r="12" fill="none" stroke="#cfcfcf" stroke-width=".9"/>
</svg>
<div class="abs" style="left:233.200px;top:490.6px;width:25.800px;height:25.800px;border-radius:50%;background:#fff;border:1px solid #d6d6d6">
</div>
<span class="t" style="left:238.36px;top:497.00px;font-size:12px;color:#5a5c8a;transform:scaleX(1.1191)">+7</span>
<svg class="abs" style="left:315px;top:410px" width="8" height="10" viewBox="0 0 8 10">
<rect x="0.2" y="0.2" width="1.700" height="1.700" fill="#aab4c6"/>
<rect x="0.2" y="4.2" width="1.700" height="1.700" fill="#aab4c6"/>
<rect x="0.2" y="8.2" width="1.700" height="1.700" fill="#aab4c6"/>
<rect x="5.6" y="0.2" width="1.700" height="1.700" fill="#aab4c6"/>
<rect x="5.6" y="4.2" width="1.700" height="1.700" fill="#aab4c6"/>
<rect x="5.6" y="8.2" width="1.700" height="1.700" fill="#aab4c6"/>
</svg>
<svg class="abs" style="left:341.9px;top:409.4px" width="15" height="11" viewBox="0 0 15 11">
<rect x="0" y="2.100" width="1.300" height="6.900" rx=".5" fill="#000"/>
<path d="M1 3.300l6.200-1.300v7.200L1 7.900z" fill="#000"/>
<rect x="7" y="0" width="1.300" height="11" rx=".6" fill="#000"/>
<rect x="9.100" y="5.050" width="5" height="1.050" fill="#000"/>
</svg>
<svg class="abs" style="left:370px;top:401px" width="28" height="28" viewBox="0 0 28 28">
<defs>
<clipPath id="cw384_415">
<circle cx="14" cy="14" r="12.500"/>
</clipPath>
</defs>
<g clip-path="url(#cw384_415)">
<rect width="28" height="28" fill="#efeeea"/>
<rect x="18" y="0" width="10" height="20" fill="#c9d2c0"/>
<rect x="20.500" y="3" width="3.500" height="12" fill="#8fa080"/>
<rect x="2" y="14" width="2.500" height="9" fill="#3b3a3a"/>
<path d="M8.800 13c-.6-5.500 1.500-9.500 5.800-9.500s6.600 3.700 6 9.500c-.3 1.800-1.600 2.600-2.800 2.600h-6c-1.400 0-2.700-.8-3-2.600z" fill="#4e3226"/>
<ellipse cx="15.300" cy="11" rx="3.200" ry="4.200" fill="#dfa58c"/>
<path d="M12.100 9.300c.6-2.300 1.900-3.300 3.600-3.300 1.400 0 2.400.8 2.800 2.600-1.300-.7-2.500-1.200-3.700-1.600-.8.800-1.700 1.600-2.700 2.300z" fill="#4e3226"/>
<ellipse cx="15.300" cy="17.300" rx="4.600" ry="2.600" fill="#d99e85"/>
<path d="M13.600 14.500h3.400v4h-3.400z" fill="#d99e85"/>
<path d="M5.500 24c.3-4.500 2.500-6.800 5.200-7.400l2.400 2.300h4.300l2.300-2.300c2.900.7 4.600 3 4.800 7.400v4h-19z" fill="#2b2c42"/>
<path d="M13 16.600h4.600l-2.300 3.200z" fill="#dba189"/>
<path d="M5.700 20.500l1.800 1.200-.8 6.300H4.900z" fill="#dba189"/>
<path d="M23.800 20.500l-1.800 1.200.8 6.300h1.800z" fill="#dba189"/>
</g>
<circle cx="14" cy="14" r="12.950" fill="none" stroke="#3a9d12" stroke-width="2.100"/>
</svg>
<svg class="abs" style="left:400.09999999999997px;top:402.4px" width="25.6" height="25.6" viewBox="0 0 28 28">
<defs>
<clipPath id="m412_415">
<circle cx="14" cy="14" r="13.300"/>
</clipPath>
</defs>
<g clip-path="url(#m412_415)">
<rect width="28" height="28" fill="#fff"/>
<path d="M3 28c0-5 4-7.300 11-7.300s11 2.300 11 7.300z" fill="#e6e6e6"/>
<path d="M14 20.700V28h11c0-5-4-7.300-11-7.300z" fill="#dadada"/>
<path d="M11.500 16h5v5.200L14 23l-2.500-1.800z" fill="#eeb989"/>
<rect x="9.500" y="3.200" width="9" height="16" rx="3.600" fill="#f5c48e"/>
<path d="M9.500 8c-.3-3.800 1.400-5.600 4.500-5.600s4.800 1.800 4.500 5.600c-.5-1.500-1-2.300-1.500-2.700h-6c-.5.400-1 1.200-1.500 2.700z" fill="#c68a52"/>
<path d="M9.500 11c.9 1.700 2.100 2.200 4.500 2.200s3.600-.5 4.500-2.200v4.600c0 2.300-2 3.900-4.500 3.900s-4.500-1.600-4.500-3.900z" fill="#d6944f"/>
<rect x="12.300" y="14.600" width="3.400" height="1" rx=".5" fill="#e8b07a"/>
</g>
<circle cx="14" cy="14" r="13.400" fill="none" stroke="#d4d4d4" stroke-width="1"/>
</svg>
<span class="t u" style="left:546.93px;top:407.00px;font-size:14.5px;color:#303030;letter-spacing:-0.173px">01:00h</span>
<svg class="abs" style="left:604px;top:405.8px" width="16" height="16" viewBox="0 0 16 16">
<rect x=".5" y=".5" width="15" height="15" fill="#efc2ef" stroke="#df8cdf"/>
<rect x="2.300" y="7" width="1.800" height="2" fill="#cc55cc"/>
<rect x="6" y="7" width="8" height="2" fill="#cc55cc"/>
</svg>
<span class="t u" style="left:623.17px;top:407.00px;font-size:14.5px;color:#303030;letter-spacing:-0.236px">Appendix Navigation Structure</span>
<svg class="abs" style="left:1013px;top:405.5px" width="16" height="16" viewBox="0 0 16 16">
<rect x=".5" y=".5" width="15" height="15" fill="#efc2ef" stroke="#df8cdf"/>
<path d="M8 3.6c-3 0-5.2 1.5-5.2 3.5 0 1.5 1.2 2.7 3 3.2l-.4 2.6 2.2-2.4H8c3 0 5.2-1.5 5.2-3.4S11 3.600 8 3.600z" fill="#efc2ef" stroke="#cc55cc" stroke-width="1"/>
</svg>
<svg class="abs" style="left:315px;top:454px" width="8" height="10" viewBox="0 0 8 10">
<rect x="0.2" y="0.2" width="1.700" height="1.700" fill="#aab4c6"/>
<rect x="0.2" y="4.2" width="1.700" height="1.700" fill="#aab4c6"/>
<rect x="0.2" y="8.2" width="1.700" height="1.700" fill="#aab4c6"/>
<rect x="5.6" y="0.2" width="1.700" height="1.700" fill="#aab4c6"/>
<rect x="5.6" y="4.2" width="1.700" height="1.700" fill="#aab4c6"/>
<rect x="5.6" y="8.2" width="1.700" height="1.700" fill="#aab4c6"/>
</svg>
<svg class="abs" style="left:341.9px;top:452.6px" width="15" height="13.500" viewBox="0 0 15 13.500">
<rect x="0" y="1.600" width="1.300" height="6.600" rx=".5" fill="#000"/>
<path d="M1 2.500l6.200-.9v3.600L4.500 7l-3.500.4z" fill="#000"/>
<rect x="6.400" y="0" width="1.400" height="5.600" rx=".5" fill="#777"/>
<rect x="8.300" y="4.300" width="4.700" height="1.300" fill="#777"/>
<path d="M9.300 10.600c-.8-1.500-1.500-2-2.400-2-1 0-1.800.8-1.800 1.900s.8 1.900 1.800 1.900c.9 0 1.600-.5 2.400-1.800.8-1.500 1.500-2 2.400-2 1 0 1.800.8 1.800 1.900s-.8 1.900-1.800 1.900c-.9 0-1.600-.5-2.400-1.800z" fill="none" stroke="#000" stroke-width="1"/>
</svg>
<svg class="abs" style="left:370px;top:445px" width="28" height="28" viewBox="0 0 28 28">
<defs>
<clipPath id="cw384_459">
<circle cx="14" cy="14" r="12.500"/>
</clipPath>
</defs>
<g clip-path="url(#cw384_459)">
<rect width="28" height="28" fill="#efeeea"/>
<rect x="18" y="0" width="10" height="20" fill="#c9d2c0"/>
<rect x="20.500" y="3" width="3.500" height="12" fill="#8fa080"/>
<rect x="2" y="14" width="2.500" height="9" fill="#3b3a3a"/>
<path d="M8.800 13c-.6-5.500 1.500-9.500 5.800-9.500s6.600 3.700 6 9.500c-.3 1.800-1.600 2.600-2.800 2.600h-6c-1.400 0-2.700-.8-3-2.600z" fill="#4e3226"/>
<ellipse cx="15.300" cy="11" rx="3.200" ry="4.200" fill="#dfa58c"/>
<path d="M12.100 9.300c.6-2.300 1.900-3.300 3.600-3.300 1.400 0 2.400.8 2.800 2.600-1.300-.7-2.500-1.200-3.700-1.600-.8.800-1.700 1.600-2.700 2.300z" fill="#4e3226"/>
<ellipse cx="15.300" cy="17.300" rx="4.600" ry="2.600" fill="#d99e85"/>
<path d="M13.600 14.500h3.400v4h-3.400z" fill="#d99e85"/>
<path d="M5.500 24c.3-4.500 2.500-6.800 5.200-7.400l2.400 2.300h4.300l2.300-2.300c2.900.7 4.600 3 4.800 7.400v4h-19z" fill="#2b2c42"/>
<path d="M13 16.600h4.600l-2.300 3.200z" fill="#dba189"/>
<path d="M5.700 20.500l1.800 1.200-.8 6.300H4.900z" fill="#dba189"/>
<path d="M23.800 20.500l-1.800 1.200.8 6.300h1.800z" fill="#dba189"/>
</g>
<circle cx="14" cy="14" r="12.950" fill="none" stroke="#3a9d12" stroke-width="2.100"/>
</svg>
<span class="t u" style="left:546.93px;top:450.00px;font-size:14.5px;color:#303030;letter-spacing:-0.173px">00:30h</span>
<svg class="abs" style="left:604px;top:449.3px" width="16" height="16" viewBox="0 0 16 16">
<rect x=".5" y=".5" width="15" height="15" fill="#efc2ef" stroke="#df8cdf"/>
<rect x="2.300" y="7" width="1.800" height="2" fill="#cc55cc"/>
<rect x="6" y="7" width="8" height="2" fill="#cc55cc"/>
</svg>
<span class="t u" style="left:622.52px;top:450.00px;font-size:14.5px;color:#303030;letter-spacing:-0.232px">Organisation</span>
<span class="t" style="left:507.56px;top:494.00px;font-size:14.5px;color:#777;letter-spacing:-0.331px">Resto 01:30h</span>
<span class="t" style="left:604.22px;top:494.00px;font-size:14.5px;color:#2668a3;letter-spacing:-0.395px">Añadir punto de agenda</span>
<div class="abs" style="left:23px;top:529px;width:1123px;height:1px;background:#e6e6e6">
</div>
<span class="t" style="left:29.45px;top:536.00px;font-size:14.5px;color:#777;letter-spacing:-0.071px;-webkit-text-stroke:0.58px #777">3 temas no planificados (00:00h)</span>
<span class="t" style="left:29.35px;top:558.00px;font-size:13px;color:#2668a3;letter-spacing:-0.352px">Crear un tema nuevo ...</span>
<div class="abs" style="left:304px;top:530.0px;width:842px;height:28px;background:#fff;border-radius:6px 0 0 6px;box-shadow:0 0 0 1px #ececec">
</div>
<svg class="abs" style="left:315px;top:538.7px" width="8" height="10" viewBox="0 0 8 10">
<rect x="0.2" y="0.2" width="1.700" height="1.700" fill="#aab4c6"/>
<rect x="0.2" y="4.2" width="1.700" height="1.700" fill="#aab4c6"/>
<rect x="0.2" y="8.2" width="1.700" height="1.700" fill="#aab4c6"/>
<rect x="5.6" y="0.2" width="1.700" height="1.700" fill="#aab4c6"/>
<rect x="5.6" y="4.2" width="1.700" height="1.700" fill="#aab4c6"/>
<rect x="5.6" y="8.2" width="1.700" height="1.700" fill="#aab4c6"/>
</svg>
<svg class="abs" style="left:340.5px;top:536.7px" width="17" height="13" viewBox="0 0 17 13" fill="none" stroke="#8f8f8f" stroke-width=".9">
<rect x=".6" y="2.400" width="2.200" height="8.400" fill="#fff"/>
<path d="M2.800 3l4.900.6M2.800 10.200l4.900-.6" stroke="#b4b4b4"/>
<rect x="7.500" y=".5" width="2.600" height="12.200" fill="#fff"/>
<rect x="10.100" y="5.600" width="5.800" height="2" fill="#fff"/>
</svg>
<span class="t u" style="left:546.93px;top:536.00px;font-size:14.5px;color:#303030;letter-spacing:-0.173px">00:00h</span>
<svg class="abs" style="left:607px;top:535.2px" width="16" height="16" viewBox="0 0 16 16">
<rect x=".5" y=".5" width="15" height="15" fill="#efc2ef" stroke="#df8cdf"/>
<path d="M8 3.6c-3 0-5.2 1.5-5.2 3.5 0 1.5 1.2 2.7 3 3.2l-.4 2.6 2.2-2.4H8c3 0 5.2-1.5 5.2-3.4S11 3.600 8 3.600z" fill="#efc2ef" stroke="#cc55cc" stroke-width="1"/>
</svg>
<span class="t u" style="left:626.22px;top:536.00px;font-size:14.5px;color:#303030;letter-spacing:-0.084px">Allocation of authorisations</span>
<span class="t u" style="left:1053.72px;top:536.00px;font-size:14.5px;color:#222;letter-spacing:0.070px;-webkit-text-stroke:0.58px #222">Abierto</span>
<div class="abs" style="left:304px;top:559.5px;width:842px;height:28px;background:#fff;border-radius:6px 0 0 6px;box-shadow:0 0 0 1px #ececec">
</div>
<svg class="abs" style="left:315px;top:567.95px" width="8" height="10" viewBox="0 0 8 10">
<rect x="0.2" y="0.2" width="1.700" height="1.700" fill="#aab4c6"/>
<rect x="0.2" y="4.2" width="1.700" height="1.700" fill="#aab4c6"/>
<rect x="0.2" y="8.2" width="1.700" height="1.700" fill="#aab4c6"/>
<rect x="5.6" y="0.2" width="1.700" height="1.700" fill="#aab4c6"/>
<rect x="5.6" y="4.2" width="1.700" height="1.700" fill="#aab4c6"/>
<rect x="5.6" y="8.2" width="1.700" height="1.700" fill="#aab4c6"/>
</svg>
<svg class="abs" style="left:340.5px;top:565.95px" width="17" height="13" viewBox="0 0 17 13" fill="none" stroke="#8f8f8f" stroke-width=".9">
<rect x=".6" y="2.400" width="2.200" height="8.400" fill="#fff"/>
<path d="M2.800 3l4.900.6M2.800 10.200l4.900-.6" stroke="#b4b4b4"/>
<rect x="7.500" y=".5" width="2.600" height="12.200" fill="#fff"/>
<rect x="10.100" y="5.600" width="5.800" height="2" fill="#fff"/>
</svg>
<span class="t u" style="left:546.93px;top:565.00px;font-size:14.5px;color:#303030;letter-spacing:-0.173px">00:00h</span>
<svg class="abs" style="left:607px;top:564.45px" width="16" height="16" viewBox="0 0 16 16">
<rect x=".5" y=".5" width="15" height="15" fill="#efc2ef" stroke="#df8cdf"/>
<path d="M8 3.6c-3 0-5.2 1.5-5.2 3.5 0 1.5 1.2 2.7 3 3.2l-.4 2.6 2.2-2.4H8c3 0 5.2-1.5 5.2-3.4S11 3.600 8 3.600z" fill="#efc2ef" stroke="#cc55cc" stroke-width="1"/>
</svg>
<span class="t u" style="left:625.64px;top:565.00px;font-size:14.5px;color:#303030;transform:scaleX(0.9281)">SEO tools</span>
<span class="t u" style="left:1053.72px;top:565.00px;font-size:14.5px;color:#222;letter-spacing:0.070px;-webkit-text-stroke:0.58px #222">Abierto</span>
<div class="abs" style="left:304px;top:589.0px;width:842px;height:28px;background:#fff;border-radius:6px 0 7px 6px;box-shadow:0 0 0 1px #ececec">
</div>
<svg class="abs" style="left:315px;top:597.2px" width="8" height="10" viewBox="0 0 8 10">
<rect x="0.2" y="0.2" width="1.700" height="1.700" fill="#aab4c6"/>
<rect x="0.2" y="4.2" width="1.700" height="1.700" fill="#aab4c6"/>
<rect x="0.2" y="8.2" width="1.700" height="1.700" fill="#aab4c6"/>
<rect x="5.6" y="0.2" width="1.700" height="1.700" fill="#aab4c6"/>
<rect x="5.6" y="4.2" width="1.700" height="1.700" fill="#aab4c6"/>
<rect x="5.6" y="8.2" width="1.700" height="1.700" fill="#aab4c6"/>
</svg>
<svg class="abs" style="left:340.5px;top:595.2px" width="17" height="13" viewBox="0 0 17 13" fill="none" stroke="#8f8f8f" stroke-width=".9">
<rect x=".6" y="2.400" width="2.200" height="8.400" fill="#fff"/>
<path d="M2.800 3l4.900.6M2.800 10.200l4.900-.6" stroke="#b4b4b4"/>
<rect x="7.500" y=".5" width="2.600" height="12.200" fill="#fff"/>
<rect x="10.100" y="5.600" width="5.800" height="2" fill="#fff"/>
</svg>
<span class="t u" style="left:546.93px;top:594.00px;font-size:14.5px;color:#303030;letter-spacing:-0.173px">00:00h</span>
<svg class="abs" style="left:607px;top:593.7px" width="16" height="16" viewBox="0 0 16 16">
<rect x=".5" y=".5" width="15" height="15" fill="#efc2ef" stroke="#df8cdf"/>
<path d="M8 3.6c-3 0-5.2 1.5-5.2 3.5 0 1.5 1.2 2.7 3 3.2l-.4 2.6 2.2-2.4H8c3 0 5.2-1.5 5.2-3.4S11 3.600 8 3.600z" fill="#efc2ef" stroke="#cc55cc" stroke-width="1"/>
</svg>
<span class="t u" style="left:625.52px;top:594.00px;font-size:14.5px;color:#303030;letter-spacing:-0.159px">Configuration full text search</span>
<span class="t u" style="left:1053.72px;top:594.00px;font-size:14.5px;color:#222;letter-spacing:0.070px;-webkit-text-stroke:0.58px #222">Abierto</span>
<div class="abs" style="left:359px;top:475.500px;width:225px;height:23.500px;background:#fff;border:1px solid #3a3a3a">
</div>
<span class="t" style="left:365.96px;top:482.00px;font-size:12px;color:#333;transform:scaleX(0.8840);font-family:'DejaVu Sans','Liberation Sans',sans-serif">Punto de la agenda de cita permanente</span>
<svg class="abs" style="left:348px;top:464px" width="14" height="21" viewBox="0 0 14 21">
<path d="M1.200 1.500v15.200l3.600-3.300 2.500 5.800 2.300-1-2.500-5.600h4.900z" fill="#fff" stroke="#000" stroke-width="1.100" stroke-linejoin="round"/>
</svg>
<svg class="abs" style="left:1125px;top:634px" width="19" height="17" viewBox="0 0 19 17">
<path d="M12.300 7.600V1.800H4.400L1.600 4.700V16h10.700v-.9" fill="none" stroke="#444" stroke-width="1.200"/>
<path d="M1.600 4.700h2.800V1.800" fill="none" stroke="#444" stroke-width="1"/>
<path d="M9.200 10.300h5V7.500l4.400 3.900-4.400 3.900v-2.800h-5z" fill="#3a3a3a"/>
</svg>
</body>
</html>
